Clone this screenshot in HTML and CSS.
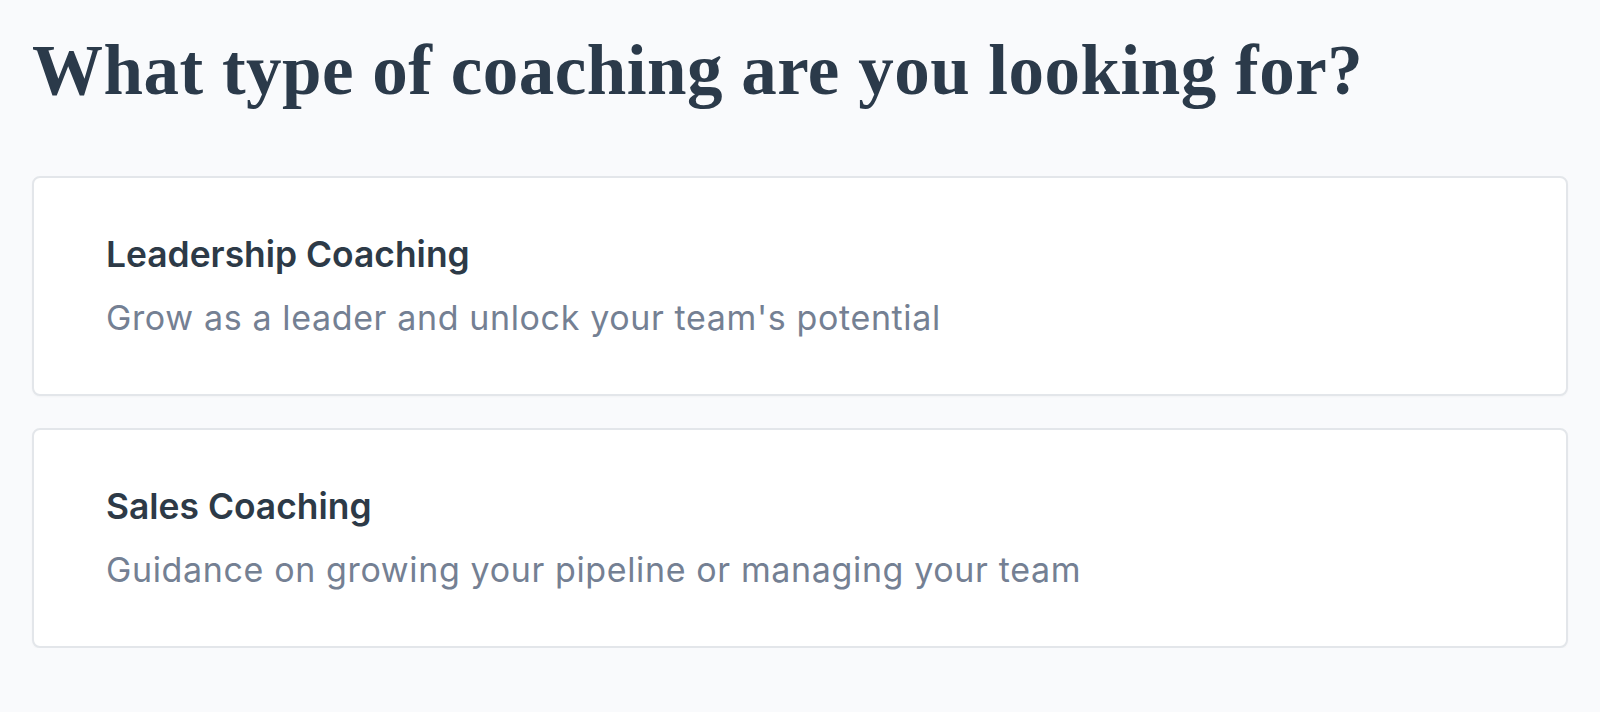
FILE: index.html
```html
<!DOCTYPE html>
<html lang="en">
<head>
    <meta charset="UTF-8">
    <meta name="viewport" content="width=device-width, initial-scale=1.0">
	<link rel="stylesheet" href="styles.css">
</head>
<body>
	<div class="container">
		<h1>What type of coaching are you looking for?</h1>
		<ul class="options">
			<li class="option">
				<div class="option-title">Leadership Coaching</div>
				<div class="option-text">Grow as a leader and unlock your team's potential</div>
			</li>
			<li class="option">
				<div class="option-title">Sales Coaching</div>
				<div class="option-text">Guidance on growing your pipeline or managing your team</div>
			</li>
		</ul>
	</div>
</body>
</html>
```

FILE: styles.css
```css
body {
	margin: 0;
	background: #f9fafc;
	font-family: 'Inter', 'Noto Sans', sans-serif;
	color: #2d3748;
}
.container {
	padding: 28px 32px 0 32px;
}
h1 {
	margin: 0 0 63px 0;
	font-family: 'Liberation Serif', serif;
	font-weight: bold;
	font-size: 71px;
	line-height: 1.2;
	color: #2b3a4a;
	letter-spacing: 0.5px;
}
.options {
	list-style: none;
	margin: 0;
	padding: 0;
	display: flex;
	flex-direction: column;
	gap: 32px;
}
.option {
	background: #fff;
	border: 2px solid #e3e6ea;
	border-radius: 8px;
	padding: 50px 72px 51px 72px;
	box-shadow: 0 1px 2px rgba(0,0,0,0.03);
}
.option-title {
	font-size: 35.4px;
	font-weight: 600;
	line-height: 1.5;
	color: #2d3a47;
	margin-bottom: 11px;
}
.option-text {
	font-size: 34px;
	letter-spacing: 0.63px;
	line-height: 1.5;
	color: #748093;
}
```
